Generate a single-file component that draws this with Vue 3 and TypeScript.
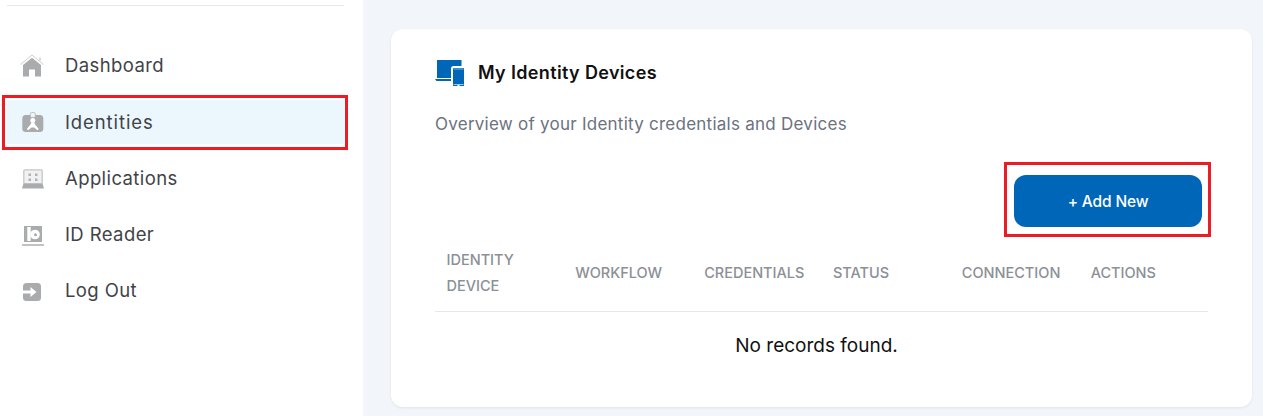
<script setup lang="ts">
const columns: string[] = ['IDENTITY DEVICE', 'WORKFLOW', 'CREDENTIALS', 'STATUS', 'CONNECTION', 'ACTIONS']
</script>

<template>
  <div class="page">
    <aside class="sidebar">
      <div class="divider"></div>
      <nav class="nav">
        <a class="nav-item">
          <svg class="nav-icon" viewBox="0 0 24 24">
            <polyline points="0.500,10.500 12,1 23.500,10.500" fill="none" stroke="#c6c8ca" stroke-width="0.9" />
            <rect x="19.500" y="3.500" width="1" height="3" fill="#b4b6b8" />
            <path d="M12 3.800 21 11v11.500h-6v-7H9v7H3V11z" fill="#a9abad" />
          </svg>
          <span>Dashboard</span>
        </a>
        <div class="marked">
          <a class="nav-item active">
            <svg class="nav-icon" viewBox="0 0 24 24">
              <rect x="2.300" y="5" width="21" height="17" rx="3.500" fill="#a9abad" />
              <rect x="10.300" y="2.500" width="5" height="5" rx="1.500" fill="#eef4f8" stroke="#b4b6b8" stroke-width="0.8" />
              <circle cx="12.800" cy="10.500" r="2.500" fill="#fff" />
              <path d="M12.800 12.500c-1.300 0-2 .8-2.300 2L6.800 19l1.400 1.200 3.300-2.700h2.600l3.300 2.700 1.400-1.200-3.700-4.500c-.3-1.200-1-2-2.300-2z" fill="#fff" />
            </svg>
            <span>Identities</span>
          </a>
        </div>
        <a class="nav-item">
          <svg class="nav-icon" viewBox="0 0 24 24">
            <rect x="3.800" y="2.800" width="18.400" height="14" rx="1" fill="#f1f1f1" stroke="#c4c6c8" stroke-width="1.300" />
            <rect x="8.500" y="6.500" width="2.500" height="2.500" fill="#b0b2b4" />
            <rect x="15" y="6.500" width="2.500" height="2.500" fill="#b0b2b4" />
            <rect x="8.500" y="11.500" width="2.500" height="2.500" fill="#b0b2b4" />
            <rect x="15" y="11.500" width="2.500" height="2.500" fill="#b0b2b4" />
            <path d="M3.500 16.500h19l1.500 5H2z" fill="#a9abad" />
          </svg>
          <span>Applications</span>
        </a>
        <a class="nav-item">
          <svg class="nav-icon" viewBox="0 0 24 24">
            <rect x="4" y="3" width="18" height="16" fill="#a9abad" />
            <rect x="7.300" y="4" width="3.400" height="14" fill="#fff" />
            <circle cx="15" cy="11.500" r="4.800" fill="#fff" />
            <circle cx="15.500" cy="11.800" r="1.500" fill="#a9abad" />
            <rect x="2" y="21" width="22" height="2" fill="#c0c2c4" />
          </svg>
          <span>ID Reader</span>
        </a>
        <a class="nav-item">
          <svg class="nav-icon" viewBox="0 0 24 24">
            <rect x="3" y="4" width="18" height="18" rx="3.500" fill="#a9abad" />
            <path d="M3 11.500h7.500V8l6 5-6 5v-3.500H3z" fill="#fff" />
          </svg>
          <span>Log Out</span>
        </a>
      </nav>
    </aside>

    <main class="main">
      <section class="card">
        <header class="card-title">
          <svg class="title-icon" viewBox="0 0 30 27">
            <path d="M2 0h24.500v18H2z" fill="#0066b8" />
            <path d="M0 19h17v2H1.500z" fill="#0066b8" />
            <rect x="17" y="7" width="13" height="20" rx="1.500" fill="#0066b8" stroke="#fff" stroke-width="2" />
            <rect x="18.500" y="8.500" width="10" height="1" fill="#7fb2db" />
            <rect x="18.500" y="24" width="10" height="0.800" fill="#cfe2f2" />
            <rect x="22.500" y="25" width="2" height="1" fill="#fff" />
          </svg>
          <h2>My Identity Devices</h2>
        </header>
        <p class="subtitle">Overview of your Identity credentials and Devices</p>

        <div class="actions">
          <div class="marked-btn">
            <button class="add-btn" type="button">+ Add New</button>
          </div>
        </div>

        <table class="devices">
          <thead>
            <tr>
              <th v-for="col in columns" :key="col">{{ col }}</th>
            </tr>
          </thead>
          <tbody>
            <tr>
              <td :colspan="columns.length">No records found.</td>
            </tr>
          </tbody>
        </table>
      </section>
    </main>
  </div>
</template>

<style>
html,
body {
  margin: 0;
  overflow: hidden;
}
</style>

<style scoped>
.page {
  display: flex;
  width: 1263px;
  height: 416px;
  overflow: hidden;
  background: #f2f5f9;
  font-family: Inter, "Noto Sans", sans-serif;
}

.sidebar {
  width: 363px;
  flex: none;
  box-sizing: border-box;
  background: #fff;
  padding: 5px 19px 0 7px;
}

.divider {
  height: 1px;
  background: #e5e7eb;
}

.nav {
  display: flex;
  flex-direction: column;
  margin-top: 37px;
}

.nav-item {
  display: flex;
  align-items: center;
  gap: 21px;
  height: 45px;
  padding-left: 13px;
  margin-bottom: 11px;
  font-size: 18.500px;
  letter-spacing: 0.400px;
  color: #3f4347;
}

.nav-item span {
  margin-bottom: 2px;
}

.marked {
  box-sizing: border-box;
  height: 55px;
  margin: -4px -4px 6px -5px;
  padding: 2px 1px 3px 2px;
  border: 3px solid #ec1c24;
}

.marked .nav-item {
  margin: 0;
  height: 44px;
  letter-spacing: 0.900px;
  background: #ecf7fd;
}

.marked .nav-item span {
  margin-bottom: 0;
}

.nav-icon {
  width: 24px;
  height: 24px;
  flex: none;
}

.main {
  flex: 1;
  padding: 29px 11px 9px 28px;
  min-width: 0;
}

.card {
  box-sizing: border-box;
  height: 378px;
  padding: 29px 44px 0;
  background: #fff;
  border-radius: 12px;
  box-shadow: 0 1px 3px rgba(0, 0, 0, 0.08);
}

.card-title {
  display: flex;
  align-items: center;
  gap: 13px;
  height: 30px;
}

.title-icon {
  width: 30px;
  height: 27px;
  flex: none;
}

h2 {
  margin: 0 0 2px;
  font-size: 18px;
  font-weight: 600;
  letter-spacing: 0.350px;
  color: #111;
}

.subtitle {
  margin: 24px 0 0;
  font-size: 17px;
  letter-spacing: 0.250px;
  line-height: 24px;
  color: #6b7280;
}

.actions {
  display: flex;
  justify-content: flex-end;
  margin-top: 26px;
}

.marked-btn {
  box-sizing: border-box;
  width: 207px;
  height: 75px;
  border: 3px solid #ec1c24;
  padding: 10px 6px 7px 7px;
  margin-right: -3px;
}

.add-btn {
  width: 188px;
  height: 52px;
  border: none;
  border-radius: 12px;
  background: #0066b8;
  color: #fff;
  font: 500 15.500px Inter, "Noto Sans", sans-serif;
  letter-spacing: -0.150px;
}

.devices {
  width: 773px;
  table-layout: fixed;
  border-collapse: collapse;
}

th {
  padding: 1px 12px 3px 11.500px;
  height: 70px;
  text-align: left;
  font-size: 14.500px;
  font-weight: 500;
  line-height: 26px;
  color: #8c9097;
  border-bottom: 1px solid #e5e7eb;
}

td {
  padding: 22px 10px 20px 0;
  text-align: center;
  font-size: 19px;
  line-height: 24px;
  color: #111;
}
</style>
